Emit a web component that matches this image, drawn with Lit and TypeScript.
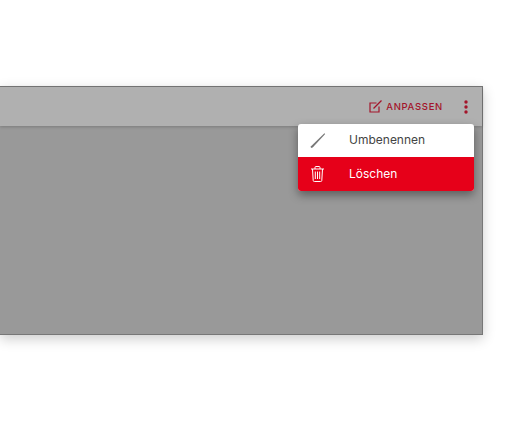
import { LitElement, html, css } from 'lit';
import { customElement } from 'lit/decorators.js';

@customElement('app-root')
export class AppRoot extends LitElement {
    static styles = css`
        :host {
            display: block;
            width: 510px;
            height: 445px;
            overflow: hidden;
            background: #fff;
            font-family: Inter, 'Noto Sans', sans-serif;
        }

        .page {
            padding-top: 86px;
        }

        .panel {
            position: relative;
            box-sizing: border-box;
            width: 483px;
            height: 249px;
            display: flex;
            flex-direction: column;
            background: #999;
            border: 1px solid #777;
            border-left: none;
            box-shadow: 0 4px 12px rgba(0, 0, 0, 0.2);
        }

        .header {
            height: 39px;
            display: flex;
            align-items: center;
            justify-content: flex-end;
            background: #b0b0b0;
            box-shadow: 0 1px 3px rgba(0, 0, 0, 0.2);
        }

        .customize {
            display: flex;
            align-items: center;
            gap: 4px;
            margin-right: 21px;
            color: #a3142a;
            font-size: 9.5px;
            font-weight: 500;
            letter-spacing: 0.7px;
        }

        .more {
            display: flex;
            margin-right: 14px;
        }

        .menu {
            position: absolute;
            top: 37px;
            left: 298px;
            width: 176px;
            border-radius: 3px;
            overflow: hidden;
            background: #fff;
            box-shadow: 0 4px 10px rgba(0, 0, 0, 0.4);
        }

        .item {
            height: 33px;
            display: flex;
            align-items: center;
            font-size: 12px;
            color: #444;
        }

        .item span {
            margin-bottom: 2px;
        }

        .item svg {
            width: 40px;
            flex: none;
            margin-right: 11px;
        }

        .item.danger {
            height: 34px;
            background: #e60019;
            color: #fff;
        }
    `;

    render() {
        return html`
            <div class="page">
                <div class="panel">
                    <div class="header">
                        <div class="customize">
                            <svg width="13" height="13" viewBox="0 0 13 13" fill="none" stroke="#a3142a" stroke-width="1.2">
                                <path d="M7.5 3H1v9h9V6.500" />
                                <path d="M4.500 8.500L12.500 0.500" />
                            </svg>
                            <span>ANPASSEN</span>
                        </div>
                        <div class="more">
                            <svg width="4" height="16" viewBox="0 0 4 16" fill="#a3142a">
                                <circle cx="2" cy="3" r="1.700" />
                                <circle cx="2" cy="8" r="1.700" />
                                <circle cx="2" cy="13" r="1.700" />
                            </svg>
                        </div>
                    </div>
                    <div class="menu">
                        <div class="item">
                            <svg height="16" viewBox="0 0 40 16" fill="#777">
                                <path d="M13 13.200L26.400 0.300L27.200 1.100L14.700 14.500L12.800 15Z" />
                            </svg>
                            <span>Umbenennen</span>
                        </div>
                        <div class="item danger">
                            <svg height="16" viewBox="0 0 40 16" fill="none" stroke="#fff" stroke-width="1">
                                <path d="M13 3h13M17 3V1.500Q17 .5 18 .5h3Q22 .5 22 1.500V3M14.500 3l.7 11.500Q15.300 15.500 16.300 15.500h6.400Q23.700 15.500 23.800 14.500L24.500 3M17.300 5.500v7.500M19.500 5.500v7.500M21.700 5.500v7.500" />
                            </svg>
                            <span>Löschen</span>
                        </div>
                    </div>
                </div>
            </div>
        `;
    }
}
